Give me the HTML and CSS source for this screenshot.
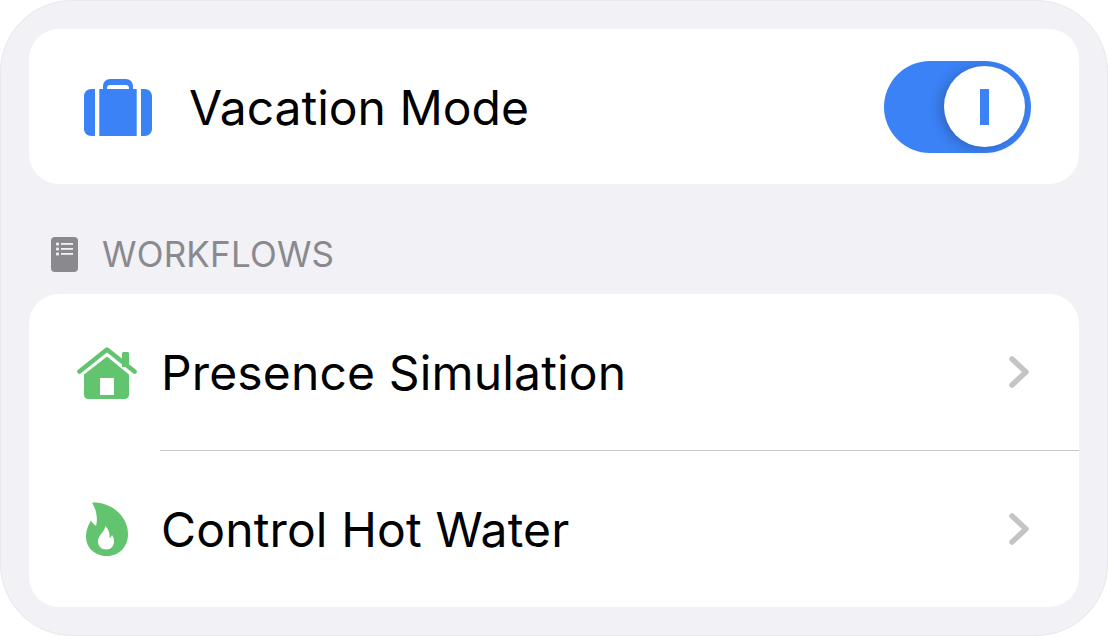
FILE: index.html
```html
<!DOCTYPE html>
<html lang="en">
<head>
<meta charset="utf-8">
<title>Vacation Mode</title>
<link rel="stylesheet" href="styles.css">
</head>
<body>
<main class="panel">
  <section class="card vacation">
    <svg class="icon-case" viewBox="0 0 68 57" aria-hidden="true">
      <path d="M19 12V7.500C19 3 22 0 26.500 0H41.500C46 0 49 3 49 7.500V12H45V9C45 7 43.800 6 42 6H26C24.200 6 23 7 23 9V12Z" fill="#3b82f6"/>
      <path d="M11 10V57H7.500C3 57 0 54 0 49.500V17.500C0 13 3 10 7.500 10ZM15.300 10H52.700V57H15.300ZM57 10H60.500C65 10 68 13 68 17.500V49.500C68 54 65 57 60.500 57H57Z" fill="#3b82f6"/>
    </svg>
    <span class="title">Vacation Mode</span>
    <div class="switch"><div class="knob"><span class="knob-bar"></span></div></div>
  </section>

  <header class="section-head">
    <svg class="icon-list" viewBox="0 0 27 35" aria-hidden="true">
      <rect width="27" height="35" rx="4" fill="#8a8a8e"/>
      <g fill="#f1f1f6">
        <rect x="5" y="5.500" width="3" height="3" rx="1"/>
        <rect x="5" y="10.500" width="3" height="3" rx="1"/>
        <rect x="5" y="15.500" width="3" height="3" rx="1"/>
        <rect x="10" y="6" width="12" height="1.800"/>
        <rect x="10" y="11" width="12" height="1.800"/>
        <rect x="10" y="16" width="12" height="1.800"/>
      </g>
    </svg>
    <span class="section-label">WORKFLOWS</span>
  </header>

  <section class="card list">
    <a class="row">
      <span class="row-icon">
        <svg class="icon-house" viewBox="0 0 60 52" aria-hidden="true">
          <path d="M45 6.500C45 5.600 45.600 5 46.500 5H50.500C51.400 5 52 5.600 52 6.500V20H45Z" fill="#63c46f"/>
          <path d="M2.500 24.500 30 2.500 57.500 24.500" fill="none" stroke="#63c46f" stroke-width="4.600" stroke-linecap="round" stroke-linejoin="round"/>
          <path d="M30 9.500 52 27.500V47.500C52 50.300 50.300 52 47.500 52H11.500C8.700 52 7 50.300 7 47.500V27.500ZM23 31V48H37V31Z" fill="#63c46f" fill-rule="evenodd"/>
        </svg>
      </span>
      <span class="row-label">Presence Simulation</span>
      <svg class="chevron" viewBox="0 0 20 32" aria-hidden="true"><path d="M3 3 17 16 3 29" fill="none" stroke="#c4c4c7" stroke-width="5.500" stroke-linecap="round" stroke-linejoin="round"/></svg>
    </a>
    <div class="sep"></div>
    <a class="row">
      <span class="row-icon">
        <svg class="icon-flame" viewBox="0 0 42 54" aria-hidden="true">
          <path fill-rule="evenodd" fill="#63c46f" d="M6 0.500C16 0 27 4 34 12 39.500 18 42 25 42 32 42 45 33 54 21 54 9 54 0 46 0 34.500 0 28 2.500 23 5 18.500 6.500 21 8 22.500 10 24 12 16.500 10.500 8 6 0.500ZM19 24C20 29 12 33 12 39.500 12 44 15.500 47.500 20 47.500 25 47.500 28 44 28 39.500 28 37 27.500 35 26 33 25.500 34.500 24.800 35.500 23.500 36 24 31 22.500 27 19 24Z"/>
        </svg>
      </span>
      <span class="row-label">Control Hot Water</span>
      <svg class="chevron" viewBox="0 0 20 32" aria-hidden="true"><path d="M3 3 17 16 3 29" fill="none" stroke="#c4c4c7" stroke-width="5.500" stroke-linecap="round" stroke-linejoin="round"/></svg>
    </a>
  </section>
</main>
</body>
</html>
```

FILE: styles.css
```css
* { box-sizing: border-box; }
html, body { margin: 0; padding: 0; background: #fff; }
body { width: 1108px; height: 636px; overflow: hidden; font-family: Inter, "Liberation Sans", sans-serif; color: #000; }

.panel {
  width: 1108px;
  height: 636px;
  padding: 28px;
  background: #f1f1f6;
  border: 1px solid #e8e7ed;
  border-radius: 72px;
  display: flex;
  flex-direction: column;
}

.card { background: #fff; border-radius: 30px; }

.vacation {
  height: 155px;
  display: flex;
  align-items: center;
  padding: 0 48px 0 55px;
}
.icon-case { width: 68px; height: 57px; flex: none; margin-top: 1px; }
.title { margin-left: 37px; padding-top: 2px; font-size: 48px; letter-spacing: 0; flex: 1; }

.switch {
  width: 147px;
  height: 92px;
  border-radius: 46px;
  background: #3b82f6;
  display: flex;
  align-items: center;
  justify-content: flex-end;
  padding-right: 6px;
  flex: none;
}
.knob {
  width: 81px;
  height: 81px;
  border-radius: 50%;
  background: #fff;
  box-shadow: -4px 2px 12px rgba(0, 0, 0, 0.22);
  display: flex;
  align-items: center;
  justify-content: center;
}
.knob-bar { width: 9px; height: 36px; background: #3b82f6; }

.section-head {
  height: 110px;
  display: flex;
  align-items: center;
  padding: 31px 0 0 22px;
}
.icon-list { width: 27px; height: 35px; flex: none; }
.section-label { margin-left: 24px; margin-bottom: 2px; font-size: 35px; color: #8a8a8e; letter-spacing: 0.2px; }

.list { height: 313px; display: flex; flex-direction: column; }
.row {
  height: 156px;
  display: flex;
  align-items: center;
  padding: 0 50px 0 48px;
}
.row-icon { width: 60px; flex: none; display: flex; justify-content: center; align-items: center; }
.icon-house { width: 60px; height: 52px; margin-top: 2px; }
.icon-flame { width: 42px; height: 54px; }
.row-label { margin-left: 24px; font-size: 48px; letter-spacing: 0.15px; flex: 1; }
.chevron { width: 20px; height: 32px; flex: none; }
.sep { height: 1px; margin-left: 131px; background: #c8c8ca; }
```
